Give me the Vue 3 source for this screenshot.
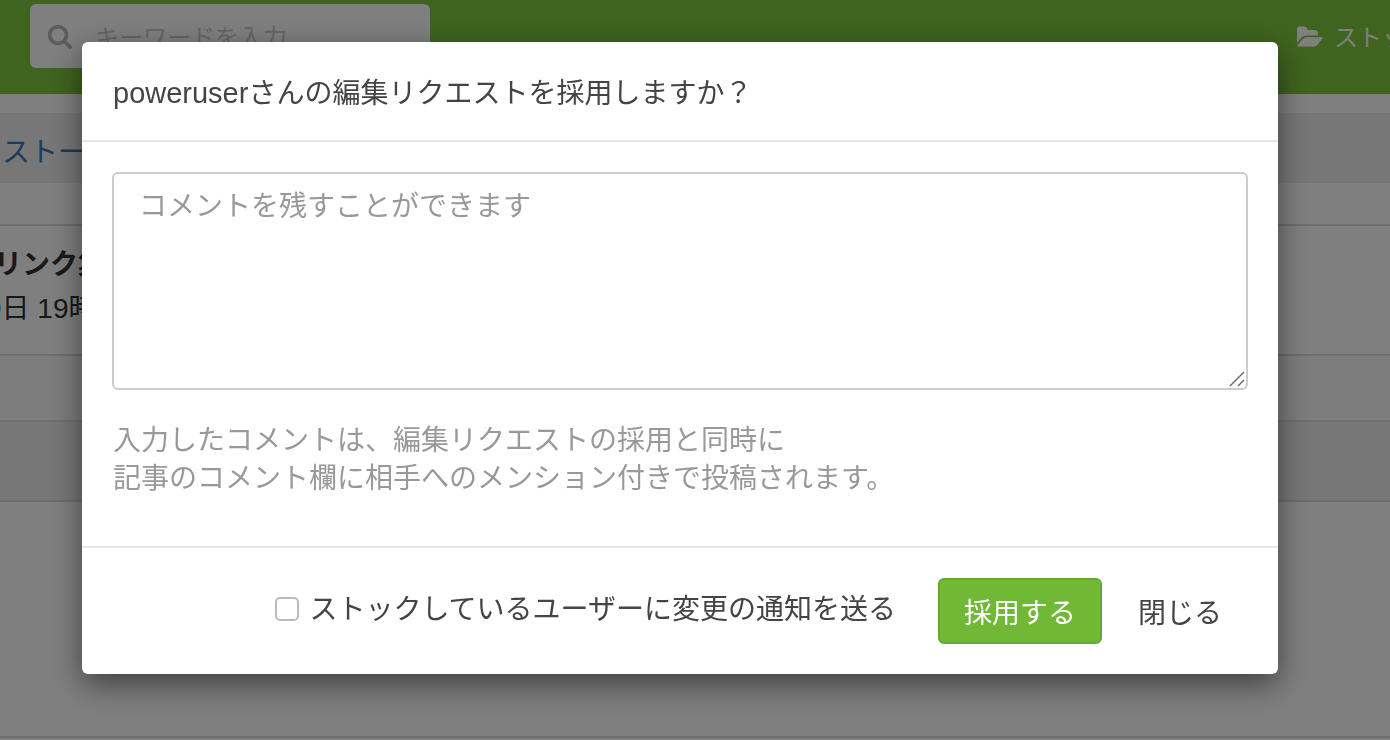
<script setup>
const name = 'poweruser'
const title = 'さんの編集リクエストを採用しますか？'
</script>

<template>
  <div class="page">
    <header class="topbar">
      <div class="search">
        <svg class="search-icon" viewBox="0 0 1792 1792"><path d="M1216 832q0-185-131.500-316.500t-316.500-131.500-316.500 131.500-131.500 316.500 131.500 316.500 316.500 131.500 316.500-131.500 131.500-316.500zm512 832q0 52-38 90t-90 38q-54 0-90-38l-343-342q-179 124-399 124-143 0-273.500-55.500t-225-150-150-225-55.500-273.500 55.500-273.500 150-225 225-150 273.500-55.500 273.500 55.500 225 150 150 225 55.500 273.500q0 220-124 399l343 343q37 37 37 90z"/></svg>
        <span class="search-text">キーワードを入力</span>
      </div>
      <div class="nav-item">
        <svg class="folder" viewBox="0 0 1920 1792"><path d="M1845 931q0 35-53 93l-336 396q-43 51-120.500 86.500t-143.500 35.500h-1088q-34 0-60.500-13t-26.500-43q0-35 53-93l336-396q43-51 120.500-86.500t143.500-35.500h1088q34 0 60.500 13t26.500 43zm-343-344v160h-832q-94 0-197 47.500t-164 119.500l-337 396-5 6q0-4-.5-12.500t-.5-12.500v-960q0-92 66-158t158-66h320q92 0 158 66t66 158v32h544q92 0 158 66t66 158z"/></svg>
        <span class="nav-text">ストック</span>
      </div>
    </header>
    <div class="spacer"></div>
    <div class="tabs"><span class="tab-link">ストーリー</span></div>
    <div class="sub"></div>
    <div class="row row-main">
      <div class="row-title">リンク集</div>
      <div class="row-date">9日 19時</div>
    </div>
    <div class="row row-a"></div>
    <div class="row row-b"></div>
    <div class="row row-c"></div>
  </div>

  <div class="backdrop">
    <div class="modal">
      <div class="modal-head"><span class="user">{{ name }}</span>{{ title }}</div>
      <div class="modal-body">
        <div class="comment-wrap">
          <textarea class="comment" placeholder="コメントを残すことができます"></textarea>
          <svg class="grip" viewBox="0 0 16 16"><path d="M1 15 L15 1 M9 15 L15 9"/></svg>
        </div>
        <p class="note">入力したコメントは、編集リクエストの採用と同時に<br>記事のコメント欄に相手へのメンション付きで投稿されます。</p>
      </div>
      <div class="modal-foot">
        <label class="check">
          <input type="checkbox" class="box">
          <span>ストックしているユーザーに変更の通知を送る</span>
        </label>
        <button class="btn primary">採用する</button>
        <button class="btn plain">閉じる</button>
      </div>
    </div>
  </div>
</template>

<style>
html, body { margin: 0; height: 100%; overflow: hidden; background: #fff; }
</style>

<style scoped>
.page, .backdrop, textarea, button {
  font-family: "Liberation Sans", "Noto Sans CJK JP", sans-serif;
}
.page {
  height: 740px;
  overflow: hidden;
  background: #fff;
  font-size: 28px;
}
.topbar {
  height: 94px;
  box-sizing: border-box;
  background: #7ec840;
  padding: 4px 0 0 30px;
  display: flex;
  align-items: flex-start;
  justify-content: space-between;
}
.search {
  width: 400px;
  height: 64px;
  box-sizing: border-box;
  background: #fff;
  border-radius: 6px;
  display: flex;
  align-items: center;
  padding-left: 17px;
}
.search-icon { width: 26px; height: 26px; fill: #bbb; flex: none; }
.search-text { margin-left: 22px; font-size: 24px; color: #ccc; margin-top: -2px; }
.nav-item {
  width: 93px;
  flex: none;
  margin-top: 18px;
  display: flex;
  align-items: center;
  white-space: nowrap;
  overflow: hidden;
  font-size: 24px;
  color: #fff;
}
.nav-text { margin-top: -4px; }
.folder { width: 27px; height: 25px; fill: #fff; flex: none; margin-right: 10px; }
.spacer { height: 19px; }
.tabs {
  height: 70px;
  box-sizing: border-box;
  padding-top: 3px;
  background: #eee;
  display: flex;
  align-items: center;
  white-space: nowrap;
}
.tab-link { color: #337ab7; margin-left: 2px; }
.sub { height: 43px; border-bottom: 2px solid #ddd; box-sizing: border-box; }
.row { border-bottom: 2px solid #ddd; box-sizing: border-box; }
.row-main { height: 130px; padding-top: 19px; white-space: nowrap; color: #333; }
.row-title { font-weight: 700; margin-left: -6px; line-height: 40px; }
.row-date { margin-left: -14px; line-height: 40px; margin-top: 4px; }
.row-a { height: 66px; background: #fafafa; }
.row-b { height: 80px; background: #eee; }
.row-c { height: 236px; }
.backdrop {
  position: fixed;
  inset: 0;
  background: rgba(0, 0, 0, 0.5);
  padding: 42px 112px 0 82px;
}
.modal {
  background: #fff;
  border-radius: 6px;
  box-shadow: 0 10px 30px rgba(0, 0, 0, 0.5);
  height: 632px;
  display: flex;
  flex-direction: column;
  color: #444;
}
.modal-head {
  height: 100px;
  box-sizing: border-box;
  border-bottom: 2px solid #e5e5e5;
  padding: 31px 30px 0 31px;
  font-size: 28px;
  line-height: 40px;
}
.user { font-size: 29px; }
.modal-body {
  flex: 1;
  padding: 30px 30px 0;
}
.comment-wrap { position: relative; }
.grip {
  position: absolute;
  right: 3px;
  bottom: 3px;
  width: 16px;
  height: 16px;
  fill: none;
  stroke: #666;
  stroke-width: 1.4;
  pointer-events: none;
}
.comment {
  display: block;
  width: 100%;
  height: 218px;
  box-sizing: border-box;
  border: 2px solid #ccc;
  border-radius: 6px;
  padding: 13px 25px;
  font-size: 28px;
  line-height: 40px;
  color: #444;
  outline: none;
  resize: none;
}
.comment::placeholder { color: #999; opacity: 1; }
.note {
  margin: 32px 0 0 1px;
  font-size: 28px;
  line-height: 38px;
  color: #999;
}
.modal-foot {
  height: 128px;
  box-sizing: border-box;
  border-top: 2px solid #e5e5e5;
  padding: 30px 30px 0;
  display: flex;
  align-items: flex-start;
  justify-content: flex-end;
}
.check {
  display: flex;
  align-items: center;
  height: 60px;
  margin-right: 42px;
  white-space: nowrap;
  font-size: 28px;
}
.check span { margin-top: -2px; }
.box {
  appearance: none;
  width: 24px;
  height: 24px;
  margin: 2px 10px 0 2px;
  box-sizing: border-box;
  border: 2px solid #bbb;
  border-radius: 5px;
  background: #fff;
}
.btn {
  height: 66px;
  box-sizing: border-box;
  border-radius: 6px;
  font-size: 28px;
  border: 2px solid transparent;
  background: none;
  white-space: nowrap;
}
.primary {
  width: 164px;
  padding: 0;
  background: #72b837;
  border-color: #6aa633;
  color: #fff;
}
.plain {
  width: 138px;
  margin-left: 8px;
  padding: 0 0 0 2px;
  color: #444;
}
</style>
